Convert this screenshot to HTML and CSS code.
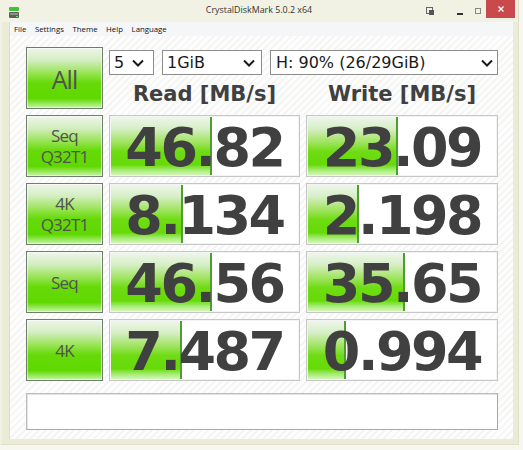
FILE: index.html
```html
<!DOCTYPE html>
<html>
<head>
<meta charset="utf-8">
<link rel="stylesheet" href="styles.css">
</head>
<body>
<div class="window">
  <div class="titlebar">
    <svg class="appicon" width="10" height="11" viewBox="0 0 10 11">
      <rect x="0" y="0" width="10" height="4" rx="1" fill="#3fc23a"/>
      <rect x="0" y="5" width="10" height="6" rx="1" fill="#5a5f5a"/>
      <rect x="1" y="6" width="8" height="2" fill="#8a908a"/>
      <rect x="7" y="9" width="2" height="1" fill="#7fe07a"/>
    </svg>
    <div class="title">CrystalDiskMark 5.0.2 x64</div>
    <div class="controls">
      <svg class="pin" width="8" height="8" viewBox="0 0 8 8">
        <rect x="0.5" y="0.5" width="6" height="6" fill="none" stroke="#666" stroke-width="1"/>
        <rect x="3" y="3" width="5" height="5" fill="#555"/>
      </svg>
      <span class="min"></span>
      <span class="max"></span>
      <span class="close">
        <svg width="6" height="6" viewBox="0 0 6 6"><path d="M0.5 0.5 L5.5 5.5 M5.5 0.5 L0.5 5.5" stroke="#fff" stroke-width="1.3"/></svg>
      </span>
    </div>
  </div>
  <div class="client">
    <div class="menubar">
      <span>File</span><span>Settings</span><span>Theme</span><span>Help</span><span>Language</span>
    </div>
    <div class="content">
      <div class="grid">
        <div class="btn all">All</div>
        <div class="topright">
          <div class="selects">
            <div class="select s1"><span>5</span><svg width="12" height="8" viewBox="0 0 12 8"><path d="M1 1.5 L6 6.5 L11 1.5" fill="none" stroke="#1a1a1a" stroke-width="2"/></svg></div>
            <div class="select s2"><span>1GiB</span><svg width="12" height="8" viewBox="0 0 12 8"><path d="M1 1.5 L6 6.5 L11 1.5" fill="none" stroke="#1a1a1a" stroke-width="2"/></svg></div>
            <div class="select s3"><span>H: 90% (26/29GiB)</span><svg width="12" height="8" viewBox="0 0 12 8"><path d="M1 1.5 L6 6.5 L11 1.5" fill="none" stroke="#1a1a1a" stroke-width="2"/></svg></div>
          </div>
          <div class="heads">
            <div class="head">Read [MB/s]</div>
            <div class="head">Write [MB/s]</div>
          </div>
        </div>

        <div class="btn label">Seq<br>Q32T1</div>
        <div class="cell"><div class="bar" style="width:53.4%"></div><span class="num">46.82</span></div>
        <div class="cell"><div class="bar" style="width:47.3%"></div><span class="num">23.09</span></div>

        <div class="btn label">4K<br>Q32T1</div>
        <div class="cell"><div class="bar" style="width:38.2%"></div><span class="num">8.134</span></div>
        <div class="cell"><div class="bar" style="width:26.8%"></div><span class="num">2.198</span></div>

        <div class="btn label">Seq</div>
        <div class="cell"><div class="bar" style="width:53.4%"></div><span class="num">46.56</span></div>
        <div class="cell"><div class="bar" style="width:51.0%"></div><span class="num">35.65</span></div>

        <div class="btn label">4K</div>
        <div class="cell"><div class="bar" style="width:37.5%"></div><span class="num">7.487</span></div>
        <div class="cell"><div class="bar" style="width:19.9%"></div><span class="num">0.994</span></div>
      </div>
      <div class="comment"></div>
    </div>
  </div>
</div>
</body>
</html>
```

FILE: styles.css
```css
* { box-sizing: border-box; }
html, body { margin: 0; padding: 0; }
body {
  background: #f7f7f0;
  width: 523px;
  height: 450px;
  overflow: hidden;
  font-family: "Open Sans", "Noto Sans", sans-serif;
}
.window {
  width: 519px;
  height: 445px;
  background: #eaecd7;
  border-left: 2px solid #f1f2e6;
  border-right: 1px solid #dfe1ca;
  border-bottom: 1px solid #dfe1ca;
  display: flex;
  flex-direction: column;
}
.titlebar {
  height: 22px;
  background: #f1f2e4;
  margin-left: -2px;
  display: flex;
  align-items: flex-start;
  position: relative;
}
.appicon { margin: 7px 0 0 9px; }
.title {
  position: absolute;
  left: 0;
  right: 0;
  top: 4px;
  text-align: center;
  font-size: 8.9px;
  color: #333;
  line-height: 12px;
}
.controls {
  margin-left: auto;
  display: flex;
  align-items: flex-start;
  height: 17px;
  margin-right: 3px;
}
.pin { margin: 7px 23px 0 0; }
.min {
  width: 6px; height: 2px; background: #333;
  margin: 13px 12px 0 0;
}
.max {
  width: 6px; height: 6px; border: 1px solid #888;
  margin: 8px 5px 0 0;
}
.close {
  width: 29px; height: 18px;
  background: #c94a4c;
  display: flex; align-items: center; justify-content: center;
}
.client {
  flex: 1;
  margin: 0 5px 5px 7px;
  display: flex;
  flex-direction: column;
  border-left: 1px solid #dcdec8;
}
.menubar {
  height: 14px;
  background: #f5f6f8;
  display: flex;
  align-items: center;
  font-size: 7.8px;
  color: #111;
  line-height: 14px;
}
.menubar span { padding: 0 4.3px; }
.menubar span:first-child { padding-left: 4px; }
.content {
  flex: 1;
  background: repeating-linear-gradient(135deg, #fdfdfd 0px, #fdfdfd 3px, #f5f5f4 3px, #f5f5f4 5px);
  padding: 11px 0 0 16px;
}
.grid {
  display: grid;
  grid-template-columns: 77px 191px 192px;
  grid-template-rows: 62px 62px 62px 62px 62px;
  column-gap: 6px;
  row-gap: 6px;
}
.btn {
  border: 1px solid #6e7d6e;
  box-shadow: inset 0 0 0 1px rgba(255,255,255,0.55);
  background: linear-gradient(to bottom, #eef5ea 0%, #d4eec2 20%, #98e454 42%, #66da08 58%, #5fd800 84%, #a0ea6a 94%, #c8f3a8 100%);
  color: #4f544f;
  display: flex;
  align-items: center;
  justify-content: center;
  text-align: center;
}
.all { font-size: 25px; letter-spacing: -1px; padding-top: 2px; }
.label { font-size: 17px; line-height: 21px; letter-spacing: -0.8px; }
.topright {
  grid-column: 2 / 4;
  display: flex;
  flex-direction: column;
}
.selects {
  display: flex;
  gap: 8px;
  margin-top: 3px;
  height: 25px;
}
.select {
  height: 25px;
  background: #fff;
  border: 1px solid #8c8c8c;
  display: flex;
  align-items: center;
  font-family: "DejaVu Sans", "Verdana", sans-serif;
  font-size: 16px;
  color: #1a1a1a;
  padding-left: 4px;
}
.select svg { margin-left: auto; }
.s1 { width: 45px; padding-right: 9px; }
.s2 { width: 100px; padding-right: 6px; }
.s3 { width: 228px; padding-left: 5px; padding-right: 4px; }
.heads {
  display: grid;
  grid-template-columns: 191px 192px;
  column-gap: 6px;
  margin-top: 6px;
}
.head {
  text-align: center;
  font-family: "DejaVu Sans", sans-serif;
  font-weight: bold;
  font-size: 21px;
  line-height: 26px;
  color: #404040;
}
.cell {
  position: relative;
  background: #fff;
  border: 1px solid #c6c6c6;
  box-shadow: inset 0 0 0 1px #f4f4f4;
  display: flex;
  align-items: center;
  justify-content: center;
  overflow: hidden;
}
.bar {
  position: absolute;
  left: 1px;
  top: 1px;
  bottom: 1px;
  border-right: 2px solid #4f9c31;
  background: linear-gradient(to bottom, #eef6ea 0%, #d6efc6 20%, #9ee35c 44%, #6edc12 60%, #66da08 82%, #a8ec78 92%, #d2f6b8 100%);
}
.num {
  position: relative;
  font-family: "DejaVu Sans", sans-serif;
  font-weight: bold;
  font-size: 54px;
  letter-spacing: -2.5px;
  line-height: 60px;
  color: #404040;
  margin-top: 3px;
}
.comment {
  margin-top: 12px;
  width: 472px;
  height: 37px;
  background: #fff;
  border: 1px solid #bdbdbd;
  border-right-color: #a8a8a8;
  border-bottom-color: #a8a8a8;
  box-shadow: inset 1px 1px 0 #e2e2e2;
}
```
